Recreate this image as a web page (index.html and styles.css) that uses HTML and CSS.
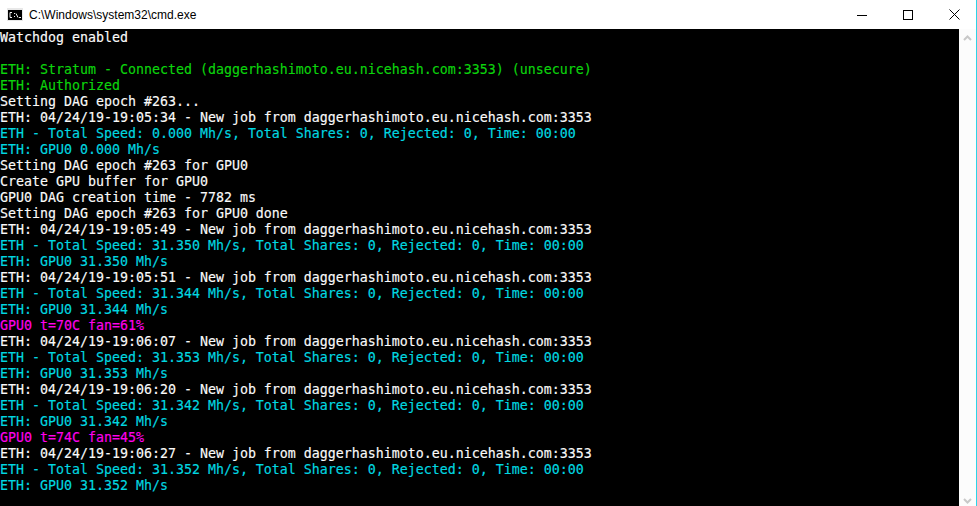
FILE: index.html
```html
<!DOCTYPE html>
<html lang="en">
<head>
<meta charset="utf-8">
<title>C:\Windows\system32\cmd.exe</title>
<link rel="stylesheet" href="styles.css">
</head>
<body>
<div class="window">
  <header class="titlebar">
    <svg class="app-icon" width="16" height="16" viewBox="0 0 16 16">
      <rect x="0" y="1" width="16" height="13" fill="#e8e8e8"/>
      <rect x="1" y="3" width="14" height="10" fill="#000"/>
      <path d="M5 5.500H3v5h2M7.500 6v1M7.500 9v1M9 6.500l2 4M12 10.500h2" fill="none" stroke="#f0f0f0" stroke-width="1"/>
    </svg>
    <span class="title">C:\Windows\system32\cmd.exe</span>
    <div class="controls">
      <span class="control"><svg width="10" height="10" viewBox="0 0 10 10"><path d="M0 5.500h10" stroke="#000"/></svg></span>
      <span class="control"><svg width="10" height="10" viewBox="0 0 10 10"><rect x=".5" y=".5" width="9" height="9" fill="none" stroke="#000"/></svg></span>
      <span class="control"><svg width="11" height="11" viewBox="0 0 11 11"><path d="M.5 .5l10 10M10.500 .5l-10 10" stroke="#000" fill="none"/></svg></span>
    </div>
  </header>
  <div class="body">
    <main class="console">
      <div class="line w">Watchdog enabled</div>
      <div class="line">&nbsp;</div>
      <div class="line g">ETH: Stratum - Connected (daggerhashimoto.eu.nicehash.com:3353) (unsecure)</div>
      <div class="line g">ETH: Authorized</div>
      <div class="line w">Setting DAG epoch #263...</div>
      <div class="line w">ETH: 04/24/19-19:05:34 - New job from daggerhashimoto.eu.nicehash.com:3353</div>
      <div class="line c">ETH - Total Speed: 0.000 Mh/s, Total Shares: 0, Rejected: 0, Time: 00:00</div>
      <div class="line c">ETH: GPU0 0.000 Mh/s</div>
      <div class="line w">Setting DAG epoch #263 for GPU0</div>
      <div class="line w">Create GPU buffer for GPU0</div>
      <div class="line w">GPU0 DAG creation time - 7782 ms</div>
      <div class="line w">Setting DAG epoch #263 for GPU0 done</div>
      <div class="line w">ETH: 04/24/19-19:05:49 - New job from daggerhashimoto.eu.nicehash.com:3353</div>
      <div class="line c">ETH - Total Speed: 31.350 Mh/s, Total Shares: 0, Rejected: 0, Time: 00:00</div>
      <div class="line c">ETH: GPU0 31.350 Mh/s</div>
      <div class="line w">ETH: 04/24/19-19:05:51 - New job from daggerhashimoto.eu.nicehash.com:3353</div>
      <div class="line c">ETH - Total Speed: 31.344 Mh/s, Total Shares: 0, Rejected: 0, Time: 00:00</div>
      <div class="line c">ETH: GPU0 31.344 Mh/s</div>
      <div class="line m">GPU0 t=70C fan=61%</div>
      <div class="line w">ETH: 04/24/19-19:06:07 - New job from daggerhashimoto.eu.nicehash.com:3353</div>
      <div class="line c">ETH - Total Speed: 31.353 Mh/s, Total Shares: 0, Rejected: 0, Time: 00:00</div>
      <div class="line c">ETH: GPU0 31.353 Mh/s</div>
      <div class="line w">ETH: 04/24/19-19:06:20 - New job from daggerhashimoto.eu.nicehash.com:3353</div>
      <div class="line c">ETH - Total Speed: 31.342 Mh/s, Total Shares: 0, Rejected: 0, Time: 00:00</div>
      <div class="line c">ETH: GPU0 31.342 Mh/s</div>
      <div class="line m">GPU0 t=74C fan=45%</div>
      <div class="line w">ETH: 04/24/19-19:06:27 - New job from daggerhashimoto.eu.nicehash.com:3353</div>
      <div class="line c">ETH - Total Speed: 31.352 Mh/s, Total Shares: 0, Rejected: 0, Time: 00:00</div>
      <div class="line c">ETH: GPU0 31.352 Mh/s</div>
    </main>
    <aside class="scrollbar">
      <svg width="9" height="6" viewBox="0 0 9 6"><path d="M1 5l3.500-3.500L8 5" fill="none" stroke="#c8c8c8" stroke-width="2"/></svg>
      <svg width="9" height="6" viewBox="0 0 9 6"><path d="M1 1l3.500 3.500L8 1" fill="none" stroke="#c8c8c8" stroke-width="2"/></svg>
    </aside>
  </div>
</div>
</body>
</html>
```
FILE: styles.css
```css
* { box-sizing: border-box; }
html, body { margin: 0; padding: 0; height: 100%; overflow: hidden; background: #fff; }
.window { height: 506px; width: 977px; display: flex; flex-direction: column; border-right: 1px solid #2bd5e8; }
.titlebar { height: 29px; flex: none; display: flex; align-items: center; padding-left: 7px; background: #fff; }
.app-icon { flex: none; margin-right: 6px; }
.title { font: 12px/16px "Liberation Sans", "Open Sans", sans-serif; color: #000; }
.controls { margin-left: auto; display: flex; margin-right: -1px; }
.control { width: 46px; height: 29px; display: flex; align-items: center; justify-content: center; }
.body { flex: 1; display: flex; min-height: 0; }
.console { width: 959px; padding-top: 1px; background: #000; font: 13.29px/16px "DejaVu Sans Mono", "Liberation Mono", monospace; overflow: hidden; }
.line { height: 16px; white-space: pre; -webkit-text-stroke: 0.15px currentColor; }
.w { color: #fafafa; }
.g { color: #0cd40c; }
.c { color: #00d8e0; }
.m { color: #ff00ec; }
.scrollbar { flex: 1; background: #fcfcfc; display: flex; flex-direction: column; justify-content: space-between; align-items: center; padding: 6px 0 2px; }
```
